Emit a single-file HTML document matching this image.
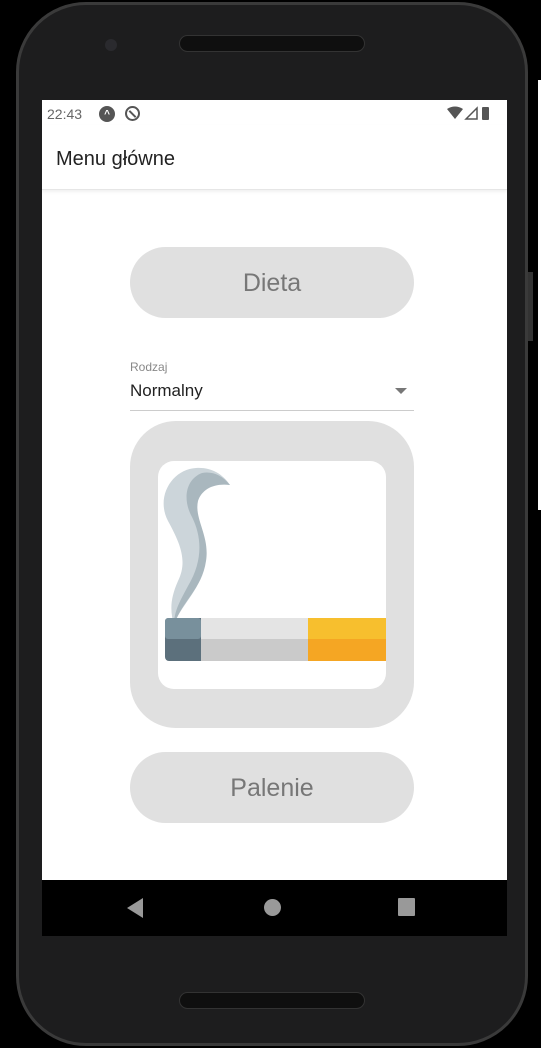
<!DOCTYPE html>
<html><head><style>
*{margin:0;padding:0;box-sizing:border-box}
body{width:541px;height:1048px;background:#000;position:relative;overflow:hidden;font-family:"Liberation Sans",sans-serif}
.phone{position:absolute;left:16px;top:2px;width:512px;height:1044px;border-radius:70px;background:#1d1d1e;border:3px solid #3a3a3a}
.spk{position:absolute;left:179px;width:186px;height:17px;border-radius:9px;background:#0f0f0f;border:1px solid #333}
.screen{position:absolute;left:42px;top:100px;width:465px;height:836px;background:#fff;overflow:hidden}
.nav{position:absolute;left:0;top:780px;width:465px;height:56px;background:#000}
.btn{position:absolute;left:88px;width:284px;height:71px;border-radius:36px;background:#e0e0e0;color:#777;font-size:25px;text-align:center;line-height:73px}
</style></head><body>
<div style="position:absolute;left:538px;top:80px;width:3px;height:430px;background:#fff"></div>
<div class="phone"></div>
<div style="position:absolute;left:105px;top:39px;width:12px;height:12px;border-radius:50%;background:#2a2a2e"></div>
<div class="spk" style="top:35px"></div>
<div class="spk" style="top:992px"></div>
<div style="position:absolute;left:528px;top:272px;width:5px;height:69px;background:#333"></div>
<div class="screen">
 <div style="position:absolute;left:5px;top:6px;font-size:14px;color:#666">22:43</div>
 <div style="position:absolute;left:57px;top:6px;width:16px;height:16px;border-radius:50%;background:#555;color:#fff;font-size:10px;font-weight:bold;text-align:center;line-height:17px">^</div>
 <div style="position:absolute;left:83px;top:6px;width:15px;height:15px;border-radius:50%;border:2px solid #555"></div>
 <div style="position:absolute;left:86px;top:13px;width:9px;height:2px;background:#555;transform:rotate(45deg)"></div>
 <svg style="position:absolute;left:405px;top:6px" width="50" height="14"><path d="M0 3 Q8 -2 16 3 L8 13Z" fill="#555"/><path d="M19 13 L30 2 V13Z" fill="none" stroke="#555" stroke-width="1.5"/><rect x="35" y="1" width="7" height="13" rx="1" fill="#555"/></svg>
 <div style="position:absolute;left:0;top:25px;width:465px;height:65px;border-bottom:1px solid #e6e6e6;box-shadow:0 2px 3px rgba(0,0,0,.06)"></div>
 <div style="position:absolute;left:14px;top:48px;font-size:20px;color:#222">Menu główne</div>
 <div class="btn" style="top:147px">Dieta</div>
 <div style="position:absolute;left:88px;top:260px;font-size:12px;color:#888">Rodzaj</div>
 <div style="position:absolute;left:88px;top:281px;font-size:17px;color:#222">Normalny</div>
 <div style="position:absolute;left:353px;top:288px;width:0;height:0;border-left:6px solid transparent;border-right:6px solid transparent;border-top:6px solid #777"></div>
 <div style="position:absolute;left:88px;top:310px;width:284px;height:1px;background:#ccc"></div>
 <div style="position:absolute;left:88px;top:321px;width:284px;height:307px;border-radius:46px;background:#e0e0e0"></div>
 <div style="position:absolute;left:116px;top:361px;width:228px;height:228px;border-radius:16px;background:#fff;overflow:hidden">
  <svg width="228" height="228" style="position:absolute;left:0;top:0">
   <path d="M38 7 C15 8 -3 35 10 60 C22 82 30 100 20 120 C12 138 12 150 16 164 C22 145 42 130 46 105 C50 80 32 62 36 42 C40 28 56 20 72 24 C64 12 52 6 38 7Z" fill="#ccd5da"/>
   <path d="M44 12 C28 18 24 38 34 56 C44 76 45 100 30 125 C22 140 16 150 16 164 C24 140 44 128 48 100 C52 75 36 58 40 40 C44 28 56 22 72 24 C64 14 54 10 44 12Z" fill="#a9b7be"/>
   <rect x="7" y="157" width="40" height="43" rx="4" fill="#5c707c"/>
   <rect x="7" y="157" width="36" height="21" rx="3" fill="#78909c"/>
   <rect x="43" y="157" width="107" height="21" fill="#e4e4e4"/>
   <rect x="43" y="178" width="107" height="22" fill="#cacaca"/>
   <rect x="150" y="157" width="78" height="21" fill="#f7bf2e"/>
   <rect x="150" y="178" width="78" height="22" fill="#f5a623"/>
  </svg>
 </div>
 <div class="btn" style="top:652px">Palenie</div>
 <div class="nav">
  <div style="position:absolute;left:85px;top:18px;width:0;height:0;border-top:10px solid transparent;border-bottom:10px solid transparent;border-right:16px solid #999"></div>
  <div style="position:absolute;left:222px;top:19px;width:17px;height:17px;border-radius:50%;background:#999"></div>
  <div style="position:absolute;left:356px;top:18px;width:17px;height:18px;background:#999;border-radius:1px"></div>
 </div>
</div>
</body></html>
